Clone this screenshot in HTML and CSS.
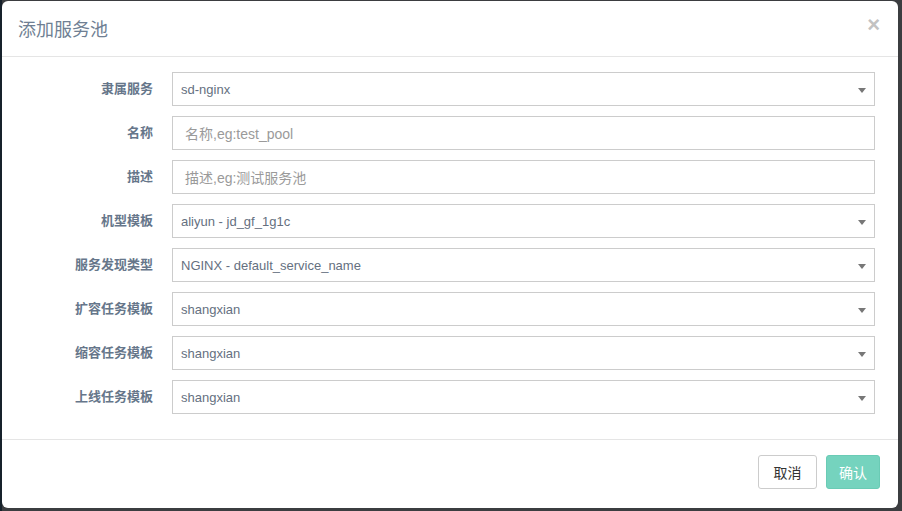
FILE: index.html
```html
<!DOCTYPE html>
<html lang="zh">
<head>
<meta charset="utf-8">
<title>添加服务池</title>
<link rel="stylesheet" href="styles.css">
</head>
<body>
<div class="backdrop">
  <div class="modal">
    <div class="modal-header">
      <h4 class="modal-title">添加服务池</h4>
      <button class="close" type="button">×</button>
    </div>
    <div class="modal-body">
      <label class="lbl">隶属服务</label>
      <div class="ctl select"><span>sd-nginx</span><i class="caret"></i></div>
      <label class="lbl">名称</label>
      <div class="ctl input"><span class="ph">名称,eg:test_pool</span></div>
      <label class="lbl">描述</label>
      <div class="ctl input"><span class="ph">描述,eg:测试服务池</span></div>
      <label class="lbl">机型模板</label>
      <div class="ctl select"><span>aliyun - jd_gf_1g1c</span><i class="caret"></i></div>
      <label class="lbl">服务发现类型</label>
      <div class="ctl select"><span>NGINX - default_service_name</span><i class="caret"></i></div>
      <label class="lbl">扩容任务模板</label>
      <div class="ctl select"><span>shangxian</span><i class="caret"></i></div>
      <label class="lbl">缩容任务模板</label>
      <div class="ctl select"><span>shangxian</span><i class="caret"></i></div>
      <label class="lbl">上线任务模板</label>
      <div class="ctl select"><span>shangxian</span><i class="caret"></i></div>
    </div>
    <div class="modal-footer">
      <button class="btn btn-default" type="button">取消</button>
      <button class="btn btn-primary" type="button">确认</button>
    </div>
  </div>
</div>
</body>
</html>
```

FILE: styles.css
```css
* { box-sizing: border-box; }
html, body {
  margin: 0;
  padding: 0;
  height: 100%;
}
body {
  font-family: "Liberation Sans", "Noto Sans CJK SC", sans-serif;
  background: #3b3d40;
}
.backdrop {
  height: 511px;
  padding: 1px 4px 3px 2px;
  background: linear-gradient(90deg, #16212b 0, #16212b 2px, #3b3d40 2px);
}
.modal {
  background: #fff;
  border-radius: 6px;
  height: 507px;
  display: flex;
  flex-direction: column;
}
.modal-header {
  height: 56px;
  border-bottom: 1px solid #e5e5e5;
  display: flex;
  align-items: center;
  justify-content: space-between;
  padding: 0 18px 2px 16px;
}
.modal-title {
  margin: 0;
  font-size: 18px;
  font-weight: normal;
  color: #6f7f93;
}
.close {
  border: 0;
  background: none;
  padding: 0;
  font-family: "Liberation Sans", sans-serif;
  font-size: 22px;
  font-weight: bold;
  color: #c2c2c2;
  line-height: 1;
  margin-top: -6px;
}
.modal-body {
  display: grid;
  grid-template-columns: 151px 1fr;
  column-gap: 19px;
  row-gap: 10px;
  padding: 15px 23px 25px 0;
  border-bottom: 1px solid #e5e5e5;
}
.lbl {
  font-size: 13px;
  font-weight: bold;
  color: #66768a;
  text-align: right;
  display: flex;
  align-items: center;
  justify-content: flex-end;
  height: 34px;
  padding-bottom: 3px;
}
.ctl {
  height: 34px;
  border: 1px solid #cccccc;
  display: flex;
  align-items: center;
  font-size: 13px;
  color: #65707f;
  position: relative;
}
.select { padding-left: 8px; }
.input { padding-left: 12px; font-size: 14px; }
.ph { color: #9a9a9a; }
.caret {
  position: absolute;
  right: 8px;
  top: 15px;
  width: 0;
  height: 0;
  border-left: 4px solid transparent;
  border-right: 4px solid transparent;
  border-top: 5px solid #777;
}
.modal-footer {
  display: flex;
  justify-content: flex-end;
  gap: 9px;
  padding: 15px 18px 0 0;
}
.btn {
  height: 34px;
  padding: 0 12px;
  font-family: "Liberation Sans", "Noto Sans CJK SC", sans-serif;
  font-size: 14px;
  border-radius: 3px;
  border: 1px solid #ccc;
  cursor: pointer;
}
.btn-default {
  background: #fff;
  color: #333;
  width: 59px;
}
.btn-primary {
  background: #75d3be;
  border-color: #6acbb5;
  color: #fff;
  width: 54px;
}
```
